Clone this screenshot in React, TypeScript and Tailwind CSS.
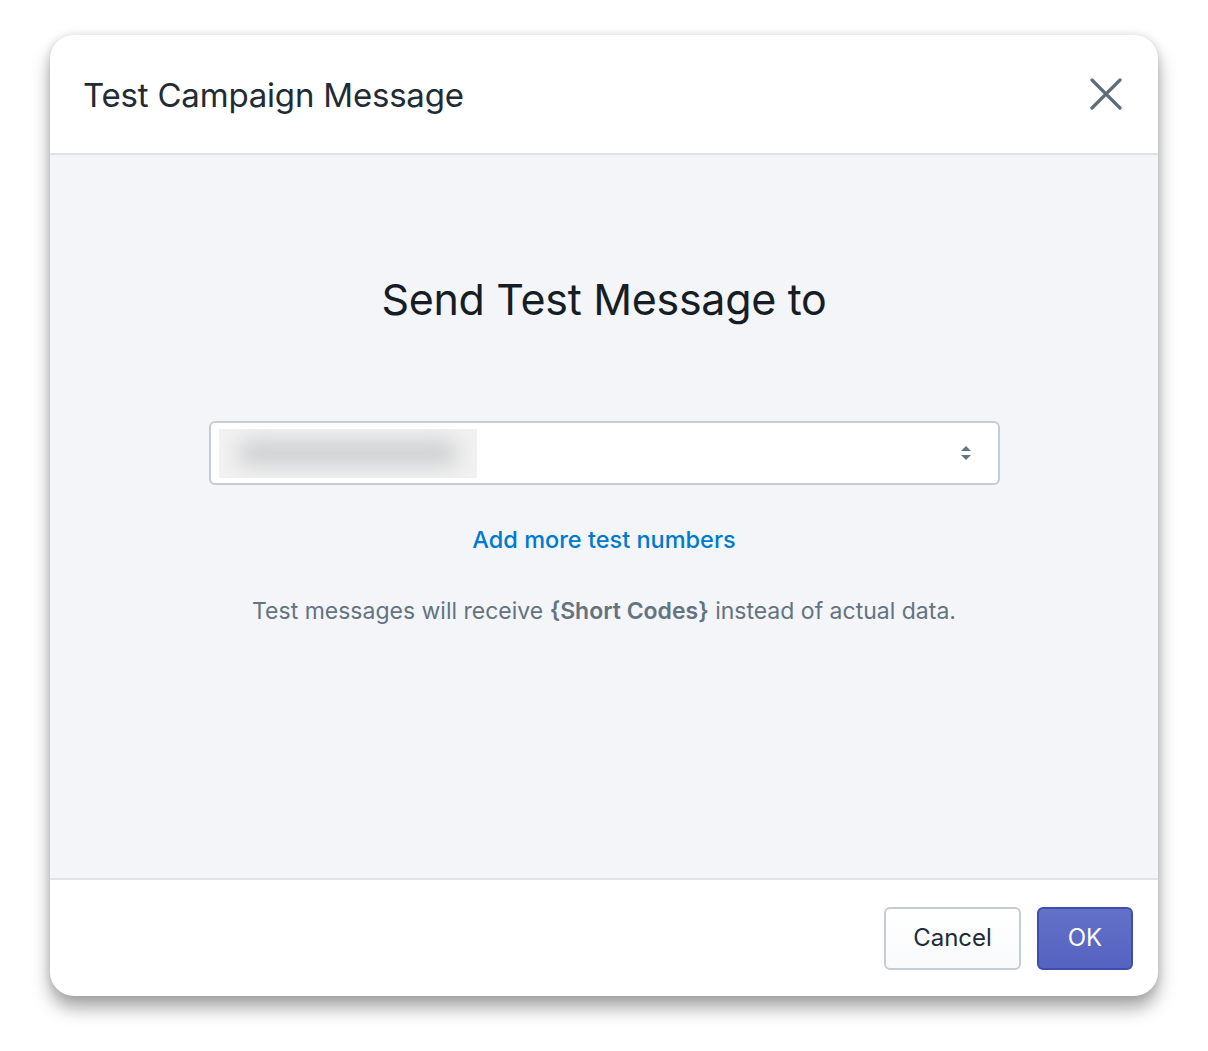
import React from 'react';

function CloseIcon() {
  return (
    <svg width="32" height="32" viewBox="0 0 32 32" fill="none">
      <path d="M2 2L30 30M30 2L2 30" stroke="#5f6d7a" strokeWidth="3.2" strokeLinecap="round" />
    </svg>
  );
}

function SelectArrows() {
  return (
    <svg width="12" height="18" viewBox="0 0 12 18">
      <path d="M1 7L6 2L11 7Z" fill="#637381" />
      <path d="M1 11L6 16L11 11Z" fill="#637381" />
    </svg>
  );
}

export default function App() {
  return (
    <div className="min-h-[1051px] bg-white pt-[35px] pl-[50px] font-['Inter',sans-serif]">
      <div className="w-[1108px] h-[961px] bg-white rounded-[24px] flex flex-col overflow-hidden shadow-[0_12px_18px_rgba(0,0,0,0.35),0_0_8px_rgba(0,0,0,0.12)]">
        <div className="h-[120px] shrink-0 flex items-center justify-between pl-[33px] pr-[36px] pt-[3px] border-b-2 border-[#dfe3e8]">
          <h1 className="text-[33px] text-[#212b36] tracking-[-0.2px]">Test Campaign Message</h1>
          <button className="flex items-center justify-center -mt-[3px]">
            <CloseIcon />
          </button>
        </div>

        <div className="flex-1 bg-[#f3f5f8] flex flex-col items-center pt-[116px]">
          <h2 className="text-[43px] leading-[56px] text-[#161d25] tracking-[-0.3px]">Send Test Message to</h2>

          <div className="mt-[94px] w-[791px] h-[64px] bg-white border-2 border-[#c4cdd5] rounded-[6px] flex items-center justify-between pl-[8px] pr-[26px]">
            <div className="w-[258px] h-[49px] bg-[#f1f1f1] flex items-center justify-center overflow-hidden">
              <div className="w-[220px] h-[26px] rounded-full bg-[#cfd0d2] blur-[10px]"></div>
            </div>
            <SelectArrows />
          </div>

          <a className="mt-[39px] text-[23.5px] leading-[32px] text-[#007ace] font-medium cursor-pointer">Add more test numbers</a>

          <p className="mt-[40px] text-[23px] leading-[30px] text-[#637381]">
            Test messages will receive <span className="font-semibold">{'{Short Codes}'}</span> instead of actual data.
          </p>
        </div>

        <div className="h-[118px] shrink-0 border-t-2 border-[#dfe3e8] flex items-center justify-end gap-[16px] pr-[25px]">
          <button className="w-[137px] h-[63px] rounded-[6px] border-2 border-[#c4cdd5] bg-gradient-to-b from-white to-[#f9fafb] text-[24px] text-[#212b36]">
            Cancel
          </button>
          <button className="w-[96px] h-[63px] rounded-[6px] border-2 border-[#3f4eae] bg-gradient-to-b from-[#6371c7] to-[#5563c1] text-[24px] text-white">
            OK
          </button>
        </div>
      </div>
    </div>
  );
}
